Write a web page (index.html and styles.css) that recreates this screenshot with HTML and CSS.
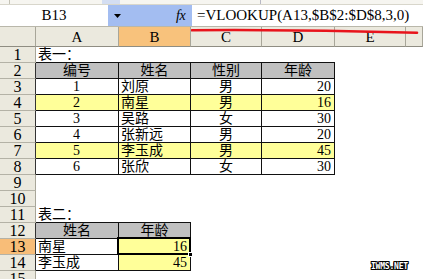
FILE: index.html
```html
<!DOCTYPE html>
<html>
<head>
<meta charset="utf-8">
<link rel="stylesheet" href="styles.css">
</head>
<body>
<div class="app">
  <div class="topstrip">
    <span class="ts ts1"></span><span class="ts ts2"></span><span class="ts ts3"></span>
  </div>
  <div class="fbar">
    <div class="namebox">B13</div>
    <div class="bluebox">
      <svg class="arrow" width="7" height="4" viewBox="0 0 7 4"><path d="M0 0H7L3.5 4Z" fill="#000"/></svg>
      <span class="fx">fx</span>
    </div>
    <div class="formula">=VLOOKUP(A13,$B$2:$D$8,3,0)</div>
    <svg class="redline" width="240" height="10" viewBox="0 0 240 10"><path d="M1 4.2 C 60 3.8, 150 4.5, 226 6.8" stroke="#e8141c" stroke-width="2.6" fill="none" stroke-linecap="round"/></svg>
  </div>
  <div class="sheet">
    <div class="h corner"></div><div class="h">A</div><div class="h sel">B</div><div class="h">C</div><div class="h">D</div><div class="h">E</div><div class="h"></div>

    <div class="rh">1</div><div class="c bb">表一：</div><div class="c bb"></div><div class="c bb"></div><div class="c bb"></div><div class="c"></div><div class="c"></div>

    <div class="rh t">2</div><div class="c b g ctr">编号</div><div class="c b g ctr">姓名</div><div class="c b g ctr">性别</div><div class="c b g ctr">年龄</div><div class="c"></div><div class="c"></div>

    <div class="rh t">3</div><div class="c b ctr num">1</div><div class="c b">刘原</div><div class="c b ctr">男</div><div class="c b r num">20</div><div class="c"></div><div class="c"></div>

    <div class="rh t">4</div><div class="c b y ctr num">2</div><div class="c b y">南星</div><div class="c b y ctr">男</div><div class="c b y r num">16</div><div class="c"></div><div class="c"></div>

    <div class="rh t">5</div><div class="c b ctr num">3</div><div class="c b">吴路</div><div class="c b ctr">女</div><div class="c b r num">30</div><div class="c"></div><div class="c"></div>

    <div class="rh t">6</div><div class="c b ctr num">4</div><div class="c b">张新远</div><div class="c b ctr">男</div><div class="c b r num">20</div><div class="c"></div><div class="c"></div>

    <div class="rh t">7</div><div class="c b y ctr num">5</div><div class="c b y">李玉成</div><div class="c b y ctr">男</div><div class="c b y r num">45</div><div class="c"></div><div class="c"></div>

    <div class="rh t">8</div><div class="c b ctr num">6</div><div class="c b">张欣</div><div class="c b ctr">女</div><div class="c b r num">30</div><div class="c"></div><div class="c"></div>

    <div class="rh">9</div><div class="c"></div><div class="c"></div><div class="c"></div><div class="c"></div><div class="c"></div><div class="c"></div>

    <div class="rh">10</div><div class="c"></div><div class="c"></div><div class="c"></div><div class="c"></div><div class="c"></div><div class="c"></div>

    <div class="rh">11</div><div class="c bb">表二：</div><div class="c bb"></div><div class="c"></div><div class="c"></div><div class="c"></div><div class="c"></div>

    <div class="rh t">12</div><div class="c b g ctr">姓名</div><div class="c b g ctr">年龄</div><div class="c"></div><div class="c"></div><div class="c"></div><div class="c"></div>

    <div class="rh t sel">13</div><div class="c b">南星</div><div class="c b y r num active">16</div><div class="c"></div><div class="c"></div><div class="c"></div><div class="c"></div>

    <div class="rh t">14</div><div class="c b">李玉成</div><div class="c b y r num">45</div><div class="c"></div><div class="c"></div><div class="c"></div><div class="c"></div>

    <div class="rh">15</div><div class="c"></div><div class="c"></div><div class="c"></div><div class="c"></div><div class="c"></div><div class="c"></div>
  </div>
  <div class="watermark">IWMS.NET</div>
</div>
</body>
</html>
```
FILE: styles.css
```css
html, body {
  margin: 0;
  padding: 0;
  background: #fff;
  overflow: hidden;
}
.app {
  position: relative;
  width: 423px;
  height: 279px;
  overflow: hidden;
  font-family: "Liberation Serif", "Noto Sans CJK SC", serif;
}
.topstrip {
  height: 5px;
  background: #f6f5f0;
  border-bottom: 1px solid #d8d6cb;
  box-sizing: border-box;
  display: flex;
}
.ts { display: block; height: 4px; }
.ts1 { width: 9px; border-right: 1px solid #c4c2b6; }
.ts2 { width: 18px; margin-left: 92px; background: #d4def2; }
.ts3 { width: 1px; margin-left: 140px; background: #b8b8c4; }
.fbar {
  position: relative;
  height: 22px;
  display: flex;
  background: #fff;
  border-bottom: 1px solid #b9b7aa;
  box-sizing: border-box;
}
.namebox {
  width: 108px;
  text-align: center;
  font-size: 15px;
  line-height: 21px;
  color: #000;
  background: #fff;
}
.bluebox {
  width: 84px;
  background: #a3bdf1;
  position: relative;
  display: flex;
  align-items: center;
}
.arrow {
  margin-left: 6px;
}
.fx {
  font-family: "Liberation Serif", serif;
  font-style: italic;
  font-size: 14px;
  margin-left: 55px;
  letter-spacing: -0.5px;
  color: #000;
}
.formula {
  flex: 1;
  padding-left: 5px;
  font-size: 15px;
  line-height: 21px;
  color: #000;
  white-space: nowrap;
}
.redline {
  position: absolute;
  left: 191px;
  top: 21px;
}
.sheet {
  display: grid;
  grid-template-columns: 36px 83px 72px 71px 73px 71px 17px;
  grid-template-rows: 20px;
  grid-auto-rows: 16px;
}
.h {
  background: #ebe9de;
  border-right: 1px solid #a8a699;
  border-bottom: 1px solid #8f8d82;
  box-sizing: border-box;
  text-align: center;
  font-size: 15px;
  line-height: 20px;
  color: #000;
}
.h.sel { background: #f8c27c; }
.rh {
  background: #ebe9de;
  border-right: 1px solid #a8a699;
  border-bottom: 1px solid #b4b2a6;
  box-sizing: border-box;
  text-align: center;
  font-size: 16px;
  line-height: 15px;
  color: #000;
}
.rh.t { border-right-color: #333; }
.rh.sel { background: #f8bd78; }
.c {
  box-sizing: border-box;
  font-size: 14px;
  line-height: 15px;
  padding: 0 2px;
  white-space: nowrap;
  overflow: visible;
  color: #000;
}
.b {
  border-right: 1px solid #111;
  border-bottom: 1px solid #111;
}
.bb { border-bottom: 1px solid #111; }
.g { background: #c0c0c0; }
.y { background: #ffff99; }
.ctr { text-align: center; }
.r { text-align: right; }
.num {
  font-size: 14px;
  padding-right: 3px;
}
.active { position: relative; }
.active::after {
  content: "";
  position: absolute;
  left: -2px;
  top: -2px;
  right: -1px;
  bottom: -1px;
  border: 2px solid #000;
}
.active::before {
  content: "";
  position: absolute;
  right: -3px;
  bottom: -3px;
  width: 5px;
  height: 5px;
  background: #000;
  border: 1px solid #fff;
  box-sizing: border-box;
  z-index: 2;
}
.watermark {
  position: absolute;
  left: 371px;
  top: 262px;
  font-family: "DejaVu Sans Mono", monospace;
  font-weight: bold;
  font-size: 8px;
  letter-spacing: -0.2px;
  color: #fff;
  text-shadow: 1px 0 0 #000, -1px 0 0 #000, 0 1px 0 #000, 0 -1px 0 #000, 1px 1px 0 #000, -1px -1px 0 #000, 1px -1px 0 #000, -1px 1px 0 #000;
}
```
